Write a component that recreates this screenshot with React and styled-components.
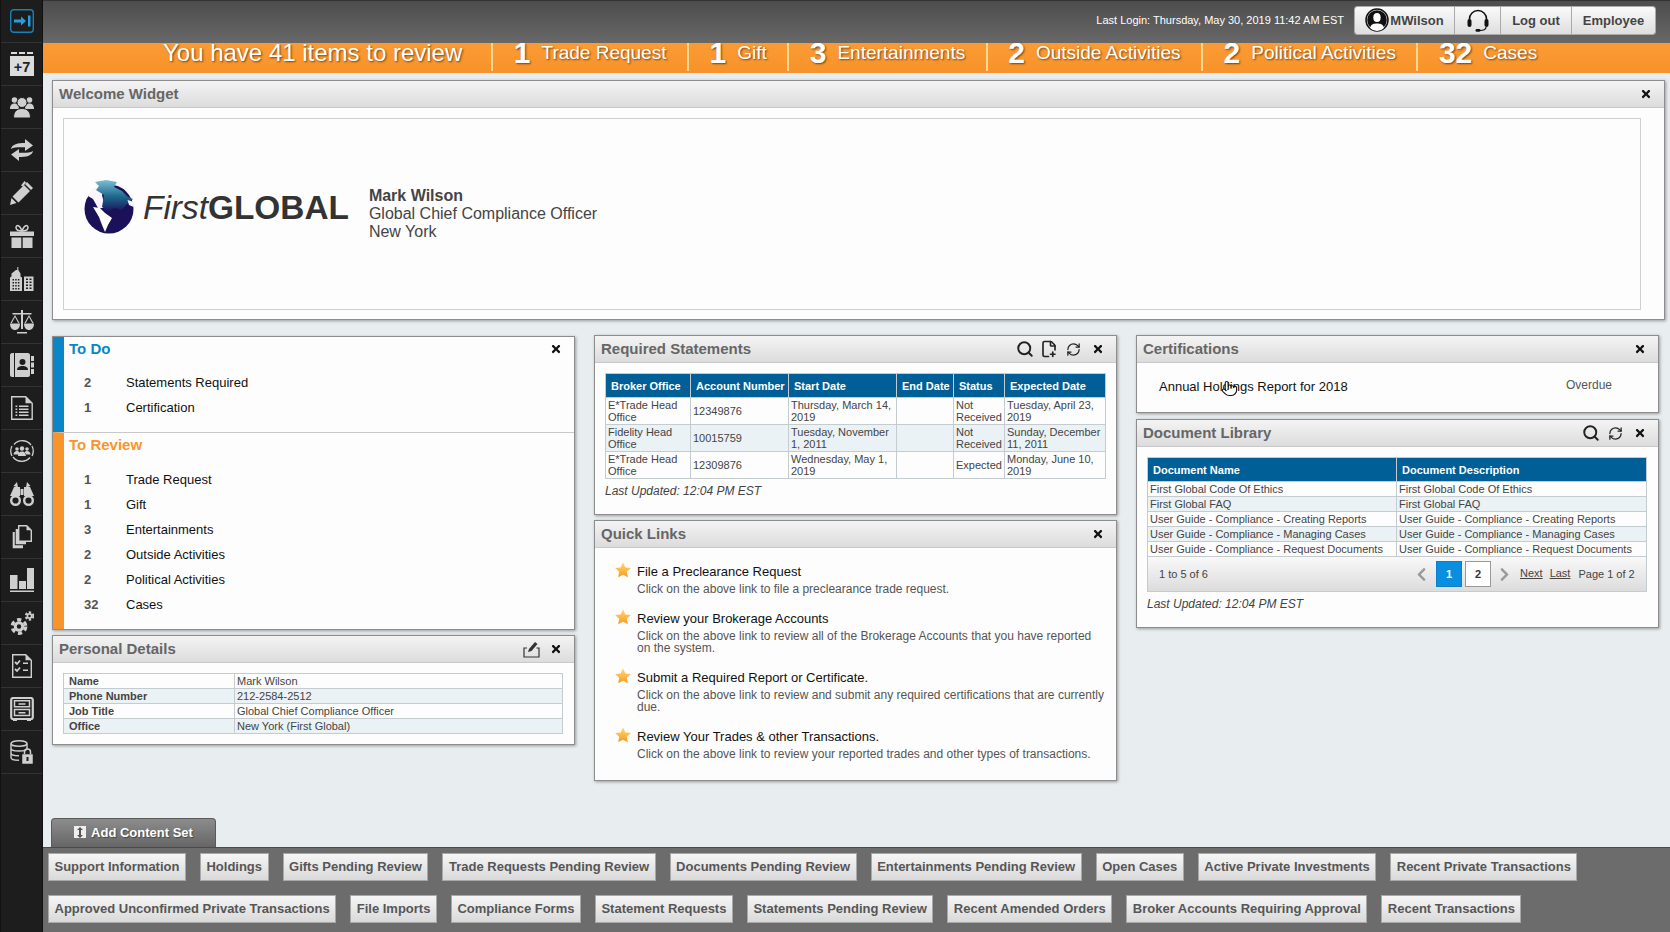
import React from 'react';
import styled, { createGlobalStyle } from 'styled-components';
import { Search, RefreshCw, FilePlus2, Pointer } from 'lucide-react';
import { FaTimes, FaChevronLeft, FaChevronRight } from 'react-icons/fa';

const Global = createGlobalStyle`
  html, body { margin: 0; padding: 0; height: 932px; overflow: hidden; }
  body { font-family: "Liberation Sans", Arial, sans-serif; background: #e8edf0; }
  * { box-sizing: border-box; }
`;

const Page = styled.div`
  display: flex; width: 1670px; height: 932px; overflow: hidden; background: #e8edf0;
`;
const Sidebar = styled.nav`
  width: 43px; flex: none; background: #1d1d1d; border-left: 1px solid #111; border-right: 1px solid #111;
  display: flex; flex-direction: column;
`;
const SideCell = styled.div`
  height: 43px; flex: none; display: flex; align-items: center; justify-content: center;
  padding-left: 1px;
  border-bottom: 1px solid #333; color: #cfcfcf;
  svg { display: block; }
`;
const Main = styled.div`
  flex: 1; min-width: 0; display: flex; flex-direction: column;
`;
const TopBar = styled.header`
  height: 43px; flex: none; position: relative; z-index: 2;
  background: linear-gradient(#4d4d4d, #686868); border-top: 1px solid #333;
  display: flex; align-items: center; justify-content: flex-end; padding: 0 14px 4px 0;
`;
const LastLogin = styled.span`
  color: #fff; font-size: 11px; margin-right: 10px; white-space: nowrap;
`;
const TopButtons = styled.div`
  display: flex; height: 29px; border: 1px solid #aaa; border-radius: 3px; overflow: hidden;
`;
const TopButton = styled.div`
  width: ${p => p.$w}px; display: flex; align-items: center; justify-content: center; gap: 1px;
  background: linear-gradient(#fafafa, #dedede); border-left: 1px solid #aaa;
  color: #444; font-size: 13px; font-weight: bold;
  &:first-child { border-left: 0; }
`;
const Banner = styled.div`
  height: 30px; flex: none; overflow: hidden; display: flex; padding-left: 120px;
  background: linear-gradient(#fb9b34, #f8922a); color: #fff;
  text-shadow: 1px 1px 2px rgba(0,0,0,.55); white-space: nowrap;
`;
const BannerLead = styled.div`
  font-size: 24px; line-height: 20px; height: 28px; padding-right: 29px; border-right: 2px solid #ffd98f;
`;
const BannerItem = styled.div`
  height: 28px; display: flex; align-items: flex-start; padding: 0 20.5px; gap: 11px;
  border-right: ${p => (p.$last ? '0' : '2px solid #ffd98f')};
`;
const BannerNum = styled.b`
  font-size: 30px; line-height: 20px;
`;
const BannerLabel = styled.span`
  font-size: 19px; line-height: 20px;
`;
const Content = styled.main`
  flex: 1; min-height: 0; display: flex; flex-direction: column; padding: 7px 5px 0 9px;
`;
const Panel = styled.section`
  background: #fdfdfd; border: 1px solid #8d8d8d; box-shadow: 1px 1px 3px rgba(0,0,0,.35);
`;
const PanelHeader = styled.div`
  height: 27px; display: flex; align-items: center; justify-content: space-between;
  padding: 0 6px 0 6px; border-bottom: 1px solid #c9c9c9;
  background: linear-gradient(#f4f4f4, #dcdcdc);
`;
const PanelTitle = styled.h2`
  margin: -2px 0 0; font-size: 15px; font-weight: bold; color: #666;
`;
const HeaderTools = styled.div`
  display: flex; align-items: center;
`;
const Tool = styled.span`
  width: 24.4px; height: 20px; display: flex; align-items: center; justify-content: center; color: #222;
`;
const WelcomeBody = styled.div`
  padding: 10px 23px 9px 10px;
`;
const WelcomeBox = styled.div`
  height: 192px; border: 1px solid #cfcfcf; display: flex; align-items: center; padding-left: 20px; background: #fdfdfd;
`;
const Logo = styled.div`
  display: flex; align-items: center; margin-bottom: 18px; margin-right: 20px; color: #333;
`;
const LogoText = styled.div`
  font-size: 33.4px; line-height: 1; margin-left: 9px; white-space: nowrap; padding-top: 6px;
  em { font-style: italic; }
  b { font-weight: bold; }
`;
const WelcomeText = styled.div`
  font-size: 16px; line-height: 17.7px; color: #444;
  b { display: block; }
`;
const Columns = styled.div`
  display: grid; grid-template-columns: repeat(3, 523px); gap: 19px; margin-top: 15px;
`;
const Column = styled.div`
  display: flex; flex-direction: column; gap: ${p => p.$gap}px; padding-top: ${p => p.$top || 0}px;
`;
const TaskSection = styled.div`
  border-left: 11px solid ${p => p.$color};
  border-top: ${p => (p.$divider ? '1px solid #c9c9c9' : '0')};
  padding: 0 0 12px 5px;
`;
const TaskHead = styled.div`
  height: 23px; display: flex; align-items: center; justify-content: space-between; padding-right: 12px;
  color: ${p => p.$color}; font-size: 15px; font-weight: bold;
`;
const TaskList = styled.ul`
  list-style: none; margin: ${p => p.$gap}px 0 0; padding: 0 0 0 15px;
`;
const TaskRow = styled.li`
  height: 25px; display: flex; align-items: center; font-size: 13px; color: #111;
`;
const TaskNum = styled.b`
  width: 42px; color: #555; font-size: 13px;
`;
const Table = styled.table`
  width: 100%; border-collapse: collapse; table-layout: fixed; font-size: 11px; color: #444;
`;
const Th = styled.th`
  background: #005f96; color: #fff; height: 24px; font-size: 11px; text-align: left;
  padding: 0 0 0 5px; border: 1px solid #c5ccd0; width: ${p => (p.$w ? `${p.$w}px` : 'auto')};
  white-space: nowrap;
`;
const Td = styled.td`
  padding: 1px 2px; line-height: 12px; border: 1px solid #c5ccd0; vertical-align: middle;
  background: ${p => (p.$alt ? '#eaf2f5' : '#fdfdfd')};
`;
const CompactTd = styled(Td)`
  height: 15px; padding: 0 2px; white-space: nowrap; overflow: hidden; font-weight: ${p => (p.$bold ? 'bold' : 'normal')};
  padding-left: ${p => (p.$bold ? 5 : 2)}px;
  width: ${p => (p.$w ? `${p.$w}px` : 'auto')};
`;
const PanelBody = styled.div`
  padding: 10px 11px 16px 10px;
`;
const DetailBody = styled.div`
  padding: 10px 11px 10px 10px;
`;
const Updated = styled.div`
  margin-top: 5px; font-size: 12px; line-height: 14px; font-style: italic; color: #444;
`;
const LinksBody = styled.div`
  padding: 15px 10px 19.5px 21px; display: flex; flex-direction: column; gap: 15px;
`;
const LinkItem = styled.div`
  display: grid; grid-template-columns: 21px 1fr;
  svg { margin: -1px 0 0 -1px; }
`;
const LinkTitle = styled.div`
  font-size: 13px; line-height: 17px; color: #111; margin-bottom: 3px;
`;
const LinkDesc = styled.div`
  font-size: 12px; line-height: 12px; color: #555;
`;
const CertBody = styled.div`
  height: 49px; display: grid; grid-template-columns: 407px 1fr; align-items: center; padding: 0 0 2px 22px;
`;
const CertLink = styled.span`
  position: relative; font-size: 13px; color: #111; justify-self: start;
`;
const Hand = styled.span`
  position: absolute; left: 62px; top: 1px; color: #111; line-height: 0;
  svg { fill: #fff; }
`;
const CertStatus = styled.span`
  font-size: 12px; color: #555; margin-bottom: 4px;
`;
const Pager = styled.div`
  height: 35px; display: flex; align-items: center; padding: 0 0 0 11px; font-size: 11px; color: #444;
  white-space: nowrap;
  background: linear-gradient(#f9f9f9, #dcdcdc); border: 1px solid #c5ccd0; border-top: 0;
`;
const PagerCount = styled.span`
  width: 248px;
`;
const PagerArrow = styled.span`
  width: ${p => p.$w}px; margin-right: ${p => p.$mr || 0}px; display: flex; justify-content: center; color: #999;
`;
const PageNum = styled.span`
  width: 26px; height: 26px; display: flex; align-items: center; justify-content: center; font-weight: bold;
  margin-right: 3px; border: 1px solid ${p => (p.$active ? '#0b7fc9' : '#999')};
  background: ${p => (p.$active ? '#0a8ee0' : '#fff')}; color: ${p => (p.$active ? '#fff' : '#333')};
`;
const PagerLink = styled.a`
  text-decoration: underline; margin-right: ${p => p.$mr}px; color: #444; margin-bottom: 2px;
`;
const Spacer = styled.div`
  flex: 1;
`;
const TabRow = styled.div`
  display: flex;
`;
const AddTab = styled.div`
  width: 165px; height: 29px; margin-left: -1px; padding-bottom: 2px; display: flex; align-items: center; justify-content: center; gap: 5px;
  border: 1px solid #5a5a5a; border-bottom: 0; border-radius: 4px 4px 0 0;
  background: linear-gradient(#8c8c8c, #666); color: #fff; font-size: 13px; font-weight: bold;
  text-shadow: 1px 1px 1px rgba(0,0,0,.4);
`;
const AddIcon = styled.span`
  width: 12px; height: 12px; background: #eee; color: #555; display: flex; align-items: center; justify-content: center;
`;
const Footer = styled.footer`
  height: 85px; flex: none; background: #6c6c6c; border-top: 1px solid #4a4a4a;
  display: flex; flex-wrap: wrap; align-content: flex-start; gap: 14px; padding: 5px 5px 0;
`;
const Chip = styled.div`
  height: 28px; display: flex; align-items: center; padding: 0 5.5px 2px; white-space: nowrap;
  border: 1px solid #a8a8a8; background: linear-gradient(#f6f6f6, #d9d9d9);
  color: #565656; font-size: 13px; font-weight: bold;
`;

const Ico = ({ children, w = 24, h = 24, vb = '0 0 24 24' }) => (
  <svg width={w} height={h} viewBox={vb} fill="currentColor">{children}</svg>
);
const D = '#1d1d1d';
const Gear = ({ x, y, r }) => (
  <g transform={`translate(${x} ${y})`}>
    <circle r={r} fill="none" stroke="currentColor" strokeWidth={r * 0.5} strokeDasharray={`${r * 0.62} ${r * 0.48}`} transform="scale(1.12)" />
    <circle r={r * 0.62} fill="none" stroke="currentColor" strokeWidth={r * 0.5} />
  </g>
);
const sideIcons = [
  <Ico>
    <rect x=".7" y=".7" width="22.6" height="22.6" rx="3" fill="none" stroke="#1b7fb8" strokeWidth="1.4" />
    <path d="M4 10.5h7V7.5l5 4.5-5 4.5v-3H4z M18 6.5h2.5v11H18z" fill="#23a0e0" />
  </Ico>,
  <Ico>
    <path d="M1 0h6v2H1zM9 0h6v2H9zM17 0h6v2h-6zM0 4h24v20H0z" fill="#dcdcdc" />
    <text x="12" y="19.5" textAnchor="middle" fontFamily="Liberation Sans" fontWeight="bold" fontSize="14.5" fill="#222">+7</text>
  </Ico>,
  <Ico>
    <circle cx="4.5" cy="5" r="2.8" /><circle cx="19.5" cy="5" r="2.8" />
    <path d="M0 14c0-4 2-5.500 4.500-5.500S9 10 9 14zM15 14c0-4 2-5.500 4.500-5.500S24 10 24 14z" />
    <circle cx="12" cy="7.500" r="5" stroke={D} strokeWidth="1" />
    <path d="M3.500 23c0-7 3.500-9.500 8.500-9.500s8.500 2.500 8.500 9.500z" stroke={D} strokeWidth="1" />
  </Ico>,
  <Ico>
    <path d="M1 11C2 6 8 5 15 5V1l8 6.500L15 13V9.300C9 9.300 4 9 1 11z" />
    <path d="M23 13c-1 5-7 6-14 6v4L1 16.500 9 11v3.700c6 0 11 .3 14-1.700z" />
  </Ico>,
  <Ico>
    <path d="M0 24l1.500-7 5 5z M2.500 15.500L14 4l6 6L8.500 21.500z M15 3l2-2 6 6-2 2z" />
    <path d="M11 4.500L14.500 0l1.500 1.500-3 4z" />
  </Ico>,
  <Ico>
    <path d="M0 7.500h24v4.500H0zM1.500 13.500h9.800V24H1.500zM12.700 13.500h9.800V24h-9.800z" />
    <path d="M12 7C8 7 6 5.500 6 3.500 6 1 9.500 0 12 7c2.500-7 6-6 6-3.500C18 5.500 16 7 12 7z" fill="none" stroke="currentColor" strokeWidth="1.500" />
  </Ico>,
  <Ico>
    <path d="M7.300 0h1v3l2.200 3.500v3l1.500 1V24H0V10.500l1.500-1v-3L6 3h1.300zM14 9.500h9.500V24H14z" />
    <g fill={D}>
      {[12, 15, 18, 21].map(y => [2.5, 5.2, 7.9].map(x => <rect key={`${x}${y}`} x={x} y={y} width="1.500" height="1.500" />))}
      {[11.500, 14.500, 17.500, 20.500].map(y => [16, 19.500].map(x => <rect key={`${x}${y}`} x={x} y={y} width="2" height="1.500" />))}
    </g>
  </Ico>,
  <Ico>
    <path d="M11 0h2v3h8.500v1.500H13V19h-2V4.500H2.500V3H11z" />
    <path d="M5 5l-4.500 8h1.300L5 7l3.200 6h1.300zM19 5l-4.500 8h1.300L19 7l3.200 6h1.300z" />
    <path d="M0 13.500h10C10 18 7.500 20 5 20S0 18 0 13.500zM14 13.500h10C24 18 21.500 20 19 20s-5-2-5-6.500z" />
    <path d="M7 22h10v1.500H7z" />
  </Ico>,
  <Ico>
    <path d="M2 0h2v24H2C1 24 0 23 0 22V2C0 1 1 0 2 0z M5 0h13c1 0 2 1 2 2v20c0 1-1 2-2 2H5z" />
    <path d="M21 3h3v5h-3zM21 9.500h3v5h-3zM21 16h3v5h-3z" />
    <circle cx="12.500" cy="9" r="3" fill={D} /><path d="M7 17c0-3 2.500-4 5.500-4s5.500 1 5.500 4z" fill={D} />
  </Ico>,
  <Ico w={22} h={24} vb="0 0 22 24">
    <path d="M.7.7h14l6.500 6.500v16.100H.7z" fill="none" stroke="currentColor" strokeWidth="1.400" />
    <path d="M14.500.7v6.500h6.500z" />
    <path d="M4.500 9.500h1.800v1.500H4.500zM8 9.500h9.500v1.500H8zM4.500 12.500h1.800V14H4.500zM8 12.500h9.500V14H8zM4.500 15.500h1.800V17H4.500zM8 15.500h9.500V17H8zM4.500 18.500h1.800V20H4.500zM8 18.500h9.500V20H8z" />
  </Ico>,
  <Ico>
    <path d="M4 5.500A11 11 0 0 1 21 6M20 18.500A11 11 0 0 1 3 18M2 17a11 11 0 0 1 0-10M22 7a11 11 0 0 1 0 10" fill="none" stroke="currentColor" strokeWidth="1.300" />
    <circle cx="7" cy="10" r="1.800" /><circle cx="17" cy="10" r="1.800" /><circle cx="12" cy="9.500" r="2.200" />
    <path d="M3.500 15.500c0-2 1.500-3.500 3.500-3.500 1 0 1.500.3 2 .8v2.700zM20.500 15.500c0-2-1.500-3.500-3.500-3.500-1 0-1.500.3-2 .8v2.700zM8 17c0-3 1.500-4.500 4-4.500s4 1.500 4 4.500z" />
  </Ico>,
  <Ico>
    <path d="M7 0l-3.500 4 4.500 1.500zM17 0l3.500 4-4.500 1.500z" />
    <path d="M4 5h6v9H0zM14 5h6l4 9H14zM10.500 7h3v6h-3z" />
    <circle cx="5.500" cy="18.500" r="4.300" fill="none" stroke="currentColor" strokeWidth="2.400" />
    <circle cx="18.500" cy="18.500" r="4.300" fill="none" stroke="currentColor" strokeWidth="2.400" />
  </Ico>,
  <Ico w={20} h={24} vb="0 0 20 24">
    <path d="M6.700.7h8l4.600 4.600v11H6.700z" fill="none" stroke="currentColor" strokeWidth="1.400" />
    <path d="M14.500.7v4.600h4.800z" />
    <path d="M6 4H3.700v15.300H14V17H6z M2.800 7H.7v16.300H11v-3H2.800z" />
  </Ico>,
  <Ico>
    <path d="M0 7h7.500v14H0zM9 13h7v8H9zM17 0h7v21h-7zM0 22.500h24V24H0z" />
  </Ico>,
  <Ico>
    <Gear x={9} y={15.500} r={6} />
    <Gear x={19.500} y={5} r={3.400} />
  </Ico>,
  <Ico w={20} h={24} vb="0 0 20 24">
    <path d="M.7.7h13l5.600 5.600v17H.7z" fill="none" stroke="currentColor" strokeWidth="1.400" />
    <path d="M13.500.7v5.600h5.800z" />
    <path d="M3 8l2 2 3-3.500M3 15l2 2 3-3.500" fill="none" stroke="currentColor" strokeWidth="1.800" />
    <path d="M11 8.500h5v1.600h-5zM11 15.500h5v1.600h-5z" />
  </Ico>,
  <Ico>
    <rect x="1.200" y="1" width="21.600" height="21" rx="2" fill="none" stroke="currentColor" strokeWidth="2.200" />
    <path d="M4.500 3.800h15v6h-15zM4.500 12.500h15v6h-15z" fill="none" stroke="currentColor" strokeWidth="1.500" />
    <path d="M8.500 6.300h7v1.500h-7zM8.500 15h7v1.500h-7zM3 22h4v2H3zM17 22h4v2h-4z" />
  </Ico>,
  <Ico>
    <g fill="none" stroke="currentColor" strokeWidth="1.400">
      <ellipse cx="9" cy="3.500" rx="8" ry="2.800" />
      <path d="M1 3.500v14c0 1.500 3 2.800 8 2.800M17 3.500v6M1 8.200c0 1.500 3 2.800 8 2.800s8-1.300 8-2.800M1 13c0 1.500 3 2.800 8 2.800" />
    </g>
    <path d="M12 14h11v10H12z" stroke={D} strokeWidth=".5" />
    <path d="M14.500 14v-2a3 3 0 0 1 6 0v2" fill="none" stroke="currentColor" strokeWidth="1.500" />
    <rect x="16.500" y="17" width="2" height="4" fill={D} />
  </Ico>,
];

const Globe = () => (
  <svg width="50" height="57" viewBox="0 0 50 57">
    <defs>
      <linearGradient id="land" x1="0" y1="0" x2="0" y2="1">
        <stop offset="0" stopColor="#7cc0d8" /><stop offset=".5" stopColor="#1f6b8e" /><stop offset="1" stopColor="#1a1159" />
      </linearGradient>
    </defs>
    <circle cx="25" cy="32" r="24.500" fill="#1a1159" />
    <path d="M4 19C8 12 14 8 22 7.500L18 18 21 31 14 31 9 22z" fill="#fbf6fd" />
    <path d="M11 5L22 3 33 5 30 10 38 14 44 20 49 22 43 27 38 33 30 31 25 35 18 30 20 18 12 13 15 9z" fill="url(#land)" />
    <path d="M43.500 23L50 25 49.500 30 45 28z" fill="#fbf6fd" />
    <path d="M9 30L16 31 21 36 28 41 24 48 21 55 18 48 15 40z" fill="#fff" />
  </svg>
);
const Star = () => (
  <svg width="16" height="16" viewBox="0 0 24 24">
    <defs><linearGradient id="st" x1="0" y1="0" x2="0" y2="1"><stop offset="0" stopColor="#ffd977" /><stop offset="1" stopColor="#f99a1c" /></linearGradient></defs>
    <path d="M12 .5l3.500 7.600 8.300 1-6.100 5.700 1.600 8.200L12 19l-7.300 4 1.600-8.200L.2 9.100l8.300-1z" fill="url(#st)" />
  </svg>
);
const Close = () => <FaTimes size={12} color="#111" />;
const Avatar = () => (
  <svg width="24" height="24" viewBox="0 0 24 24">
    <circle cx="12" cy="12" r="11" fill="#fff" stroke="#111" strokeWidth="1.500" />
    <circle cx="12" cy="12" r="9.800" fill="#111" />
    <ellipse cx="12" cy="9.500" rx="3.700" ry="4.500" fill="#fff" />
    <path d="M5 20c1-4 4-4.500 7-4.500s6 .5 7 4.500a9.800 9.800 0 0 1-14 0z" fill="#fff" />
  </svg>
);
const Headset = () => (
  <svg width="24" height="24" viewBox="0 0 24 24">
    <path d="M3.500 14V11a8.500 8.500 0 0 1 17 0v3" fill="none" stroke="#111" strokeWidth="1.600" />
    <rect x="1.500" y="11" width="4" height="8" rx="2" fill="#111" /><rect x="18.500" y="11" width="4" height="8" rx="2" fill="#111" />
    <path d="M20 19c0 3-3 3.500-6 3.500" fill="none" stroke="#111" strokeWidth="1.200" /><rect x="9.500" y="21" width="5" height="2.800" rx="1.400" fill="#111" />
  </svg>
);
const EditIcon = () => (
  <svg width="17" height="17" viewBox="0 0 17 17" fill="none" stroke="#333" strokeWidth="1.200">
    <path d="M4 7H1v9h15V7h-2.500" />
    <path d="M5 11l1-3 6-7 2.500 2-6 7z" fill="#333" stroke="none" />
  </svg>
);

const statements = [
  ['E*Trade Head Office', '12349876', 'Thursday, March 14, 2019', '', 'Not Received', 'Tuesday, April 23, 2019'],
  ['Fidelity Head Office', '10015759', 'Tuesday, November 1, 2011', '', 'Not Received', 'Sunday, December 11, 2011'],
  ['E*Trade Head Office', '12309876', 'Wednesday, May 1, 2019', '', 'Expected', 'Monday, June 10, 2019'],
];
const statementCols = [['Broker Office', 85], ['Account Number', 98], ['Start Date', 108], ['End Date', 57], ['Status', 51], ['Expected Date', 101]];
const details = [['Name', 'Mark Wilson'], ['Phone Number', '212-2584-2512'], ['Job Title', 'Global Chief Compliance Officer'], ['Office', 'New York (First Global)']];
const docs = ['First Global Code Of Ethics', 'First Global FAQ', 'User Guide - Compliance - Creating Reports', 'User Guide - Compliance - Managing Cases', 'User Guide - Compliance - Request Documents'];
const links = [
  ['File a Preclearance Request', 'Click on the above link to file a preclearance trade request.'],
  ['Review your Brokerage Accounts', 'Click on the above link to review all of the Brokerage Accounts that you have reported on the system.'],
  ['Submit a Required Report or Certificate.', 'Click on the above link to review and submit any required certifications that are currently due.'],
  ['Review Your Trades & other Transactions.', 'Click on the above link to review your reported trades and other types of transactions.'],
];
const review = [['1', 'Trade Request'], ['1', 'Gift'], ['3', 'Entertainments'], ['2', 'Outside Activities'], ['2', 'Political Activities'], ['32', 'Cases']];
const chips = ['Support Information', 'Holdings', 'Gifts Pending Review', 'Trade Requests Pending Review', 'Documents Pending Review', 'Entertainments Pending Review', 'Open Cases', 'Active Private Investments', 'Recent Private Transactions', 'Approved Unconfirmed Private Transactions', 'File Imports', 'Compliance Forms', 'Statement Requests', 'Statements Pending Review', 'Recent Amended Orders', 'Broker Accounts Requiring Approval', 'Recent Transactions'];

export default function App() {
  return (
    <Page>
      <Global />
      <Sidebar>
        {sideIcons.map((icon, i) => <SideCell key={i}>{icon}</SideCell>)}
      </Sidebar>
      <Main>
        <TopBar>
          <LastLogin>Last Login: Thursday, May 30, 2019 11:42 AM EST</LastLogin>
          <TopButtons>
            <TopButton $w={99}><Avatar />MWilson</TopButton>
            <TopButton $w={46}><Headset /></TopButton>
            <TopButton $w={71}>Log out</TopButton>
            <TopButton $w={84}>Employee</TopButton>
          </TopButtons>
        </TopBar>
        <Banner>
          <BannerLead>You have 41 items to review</BannerLead>
          {review.map(([n, l], i) => (
            <BannerItem key={l} $last={i === review.length - 1}><BannerNum>{n}</BannerNum><BannerLabel>{l}</BannerLabel></BannerItem>
          ))}
        </Banner>
        <Content>
          <Panel>
            <PanelHeader>
              <PanelTitle>Welcome Widget</PanelTitle>
              <HeaderTools><Tool><Close /></Tool></HeaderTools>
            </PanelHeader>
            <WelcomeBody>
              <WelcomeBox>
                <Logo>
                  <Globe />
                  <LogoText><em>First</em><b>GLOBAL</b></LogoText>
                </Logo>
                <WelcomeText>
                  <b>Mark Wilson</b>
                  Global Chief Compliance Officer<br />New York
                </WelcomeText>
              </WelcomeBox>
            </WelcomeBody>
          </Panel>
          <Columns>
            <Column $top={1} $gap={5}>
              <Panel>
                <TaskSection $color="#0a86c8">
                  <TaskHead $color="#0a86c8">To Do<Close /></TaskHead>
                  <TaskList $gap={10}>
                    <TaskRow><TaskNum>2</TaskNum>Statements Required</TaskRow>
                    <TaskRow><TaskNum>1</TaskNum>Certification</TaskRow>
                  </TaskList>
                </TaskSection>
                <TaskSection $color="#f7952c" $divider>
                  <TaskHead $color="#f7952c">To Review</TaskHead>
                  <TaskList $gap={11}>
                    {review.map(([n, l]) => <TaskRow key={l}><TaskNum>{n}</TaskNum>{l}</TaskRow>)}
                  </TaskList>
                </TaskSection>
              </Panel>
              <Panel>
                <PanelHeader>
                  <PanelTitle>Personal Details</PanelTitle>
                  <HeaderTools><Tool><EditIcon /></Tool><Tool><Close /></Tool></HeaderTools>
                </PanelHeader>
                <DetailBody>
                  <Table>
                    <tbody>
                      {details.map(([k, v], i) => (
                        <tr key={k}><CompactTd $bold $w={171} $alt={i % 2 === 1}>{k}</CompactTd><CompactTd $alt={i % 2 === 1}>{v}</CompactTd></tr>
                      ))}
                    </tbody>
                  </Table>
                </DetailBody>
              </Panel>
            </Column>
            <Column $gap={5}>
              <Panel>
                <PanelHeader>
                  <PanelTitle>Required Statements</PanelTitle>
                  <HeaderTools>
                    <Tool><Search size={18} strokeWidth={2.6} /></Tool>
                    <Tool><FilePlus2 size={18} strokeWidth={2.2} /></Tool>
                    <Tool><RefreshCw size={15} strokeWidth={2} /></Tool>
                    <Tool><Close /></Tool>
                  </HeaderTools>
                </PanelHeader>
                <PanelBody>
                  <Table>
                    <thead>
                      <tr>{statementCols.map(([t, w]) => <Th key={t} $w={w}>{t}</Th>)}</tr>
                    </thead>
                    <tbody>
                      {statements.map((r, i) => (
                        <tr key={r[1]}>{r.map((c, j) => <Td key={j} $alt={i === 1}>{c}</Td>)}</tr>
                      ))}
                    </tbody>
                  </Table>
                  <Updated>Last Updated: 12:04 PM EST</Updated>
                </PanelBody>
              </Panel>
              <Panel>
                <PanelHeader>
                  <PanelTitle>Quick Links</PanelTitle>
                  <HeaderTools><Tool><Close /></Tool></HeaderTools>
                </PanelHeader>
                <LinksBody>
                  {links.map(([t, d]) => (
                    <LinkItem key={t}>
                      <Star />
                      <div><LinkTitle>{t}</LinkTitle><LinkDesc>{d}</LinkDesc></div>
                    </LinkItem>
                  ))}
                </LinksBody>
              </Panel>
            </Column>
            <Column $gap={6}>
              <Panel>
                <PanelHeader>
                  <PanelTitle>Certifications</PanelTitle>
                  <HeaderTools><Tool><Close /></Tool></HeaderTools>
                </PanelHeader>
                <CertBody>
                  <CertLink>Annual Holdings Report for 2018<Hand><Pointer size={17} strokeWidth={1.5} /></Hand></CertLink>
                  <CertStatus>Overdue</CertStatus>
                </CertBody>
              </Panel>
              <Panel>
                <PanelHeader>
                  <PanelTitle>Document Library</PanelTitle>
                  <HeaderTools>
                    <Tool><Search size={18} strokeWidth={2.6} /></Tool>
                    <Tool><RefreshCw size={15} strokeWidth={2} /></Tool>
                    <Tool><Close /></Tool>
                  </HeaderTools>
                </PanelHeader>
                <PanelBody>
                  <Table>
                    <thead>
                      <tr><Th $w={249}>Document Name</Th><Th>Document Description</Th></tr>
                    </thead>
                    <tbody>
                      {docs.map((d, i) => (
                        <tr key={d}><CompactTd $alt={i % 2 === 1}>{d}</CompactTd><CompactTd $alt={i % 2 === 1}>{d}</CompactTd></tr>
                      ))}
                    </tbody>
                  </Table>
                  <Pager>
                    <PagerCount>1 to 5 of 6</PagerCount>
                    <PagerArrow $w={29}><FaChevronLeft size={15} /></PagerArrow>
                    <PageNum $active>1</PageNum>
                    <PageNum>2</PageNum>
                    <PagerArrow $w={21} $mr={5}><FaChevronRight size={15} /></PagerArrow>
                    <PagerLink $mr={7}>Next</PagerLink>
                    <PagerLink $mr={8}>Last</PagerLink>
                    <span>Page 1 of 2</span>
                  </Pager>
                  <Updated>Last Updated: 12:04 PM EST</Updated>
                </PanelBody>
              </Panel>
            </Column>
          </Columns>
          <Spacer />
          <TabRow>
            <AddTab>
              <AddIcon>
                <svg width="8" height="11" viewBox="0 0 8 11" fill="currentColor"><path d="M4 0l3 3H5v5h2l-3 3-3-3h2V3H1z" /></svg>
              </AddIcon>
              Add Content Set
            </AddTab>
          </TabRow>
        </Content>
        <Footer>
          {chips.map(c => <Chip key={c}>{c}</Chip>)}
        </Footer>
      </Main>
    </Page>
  );
}
